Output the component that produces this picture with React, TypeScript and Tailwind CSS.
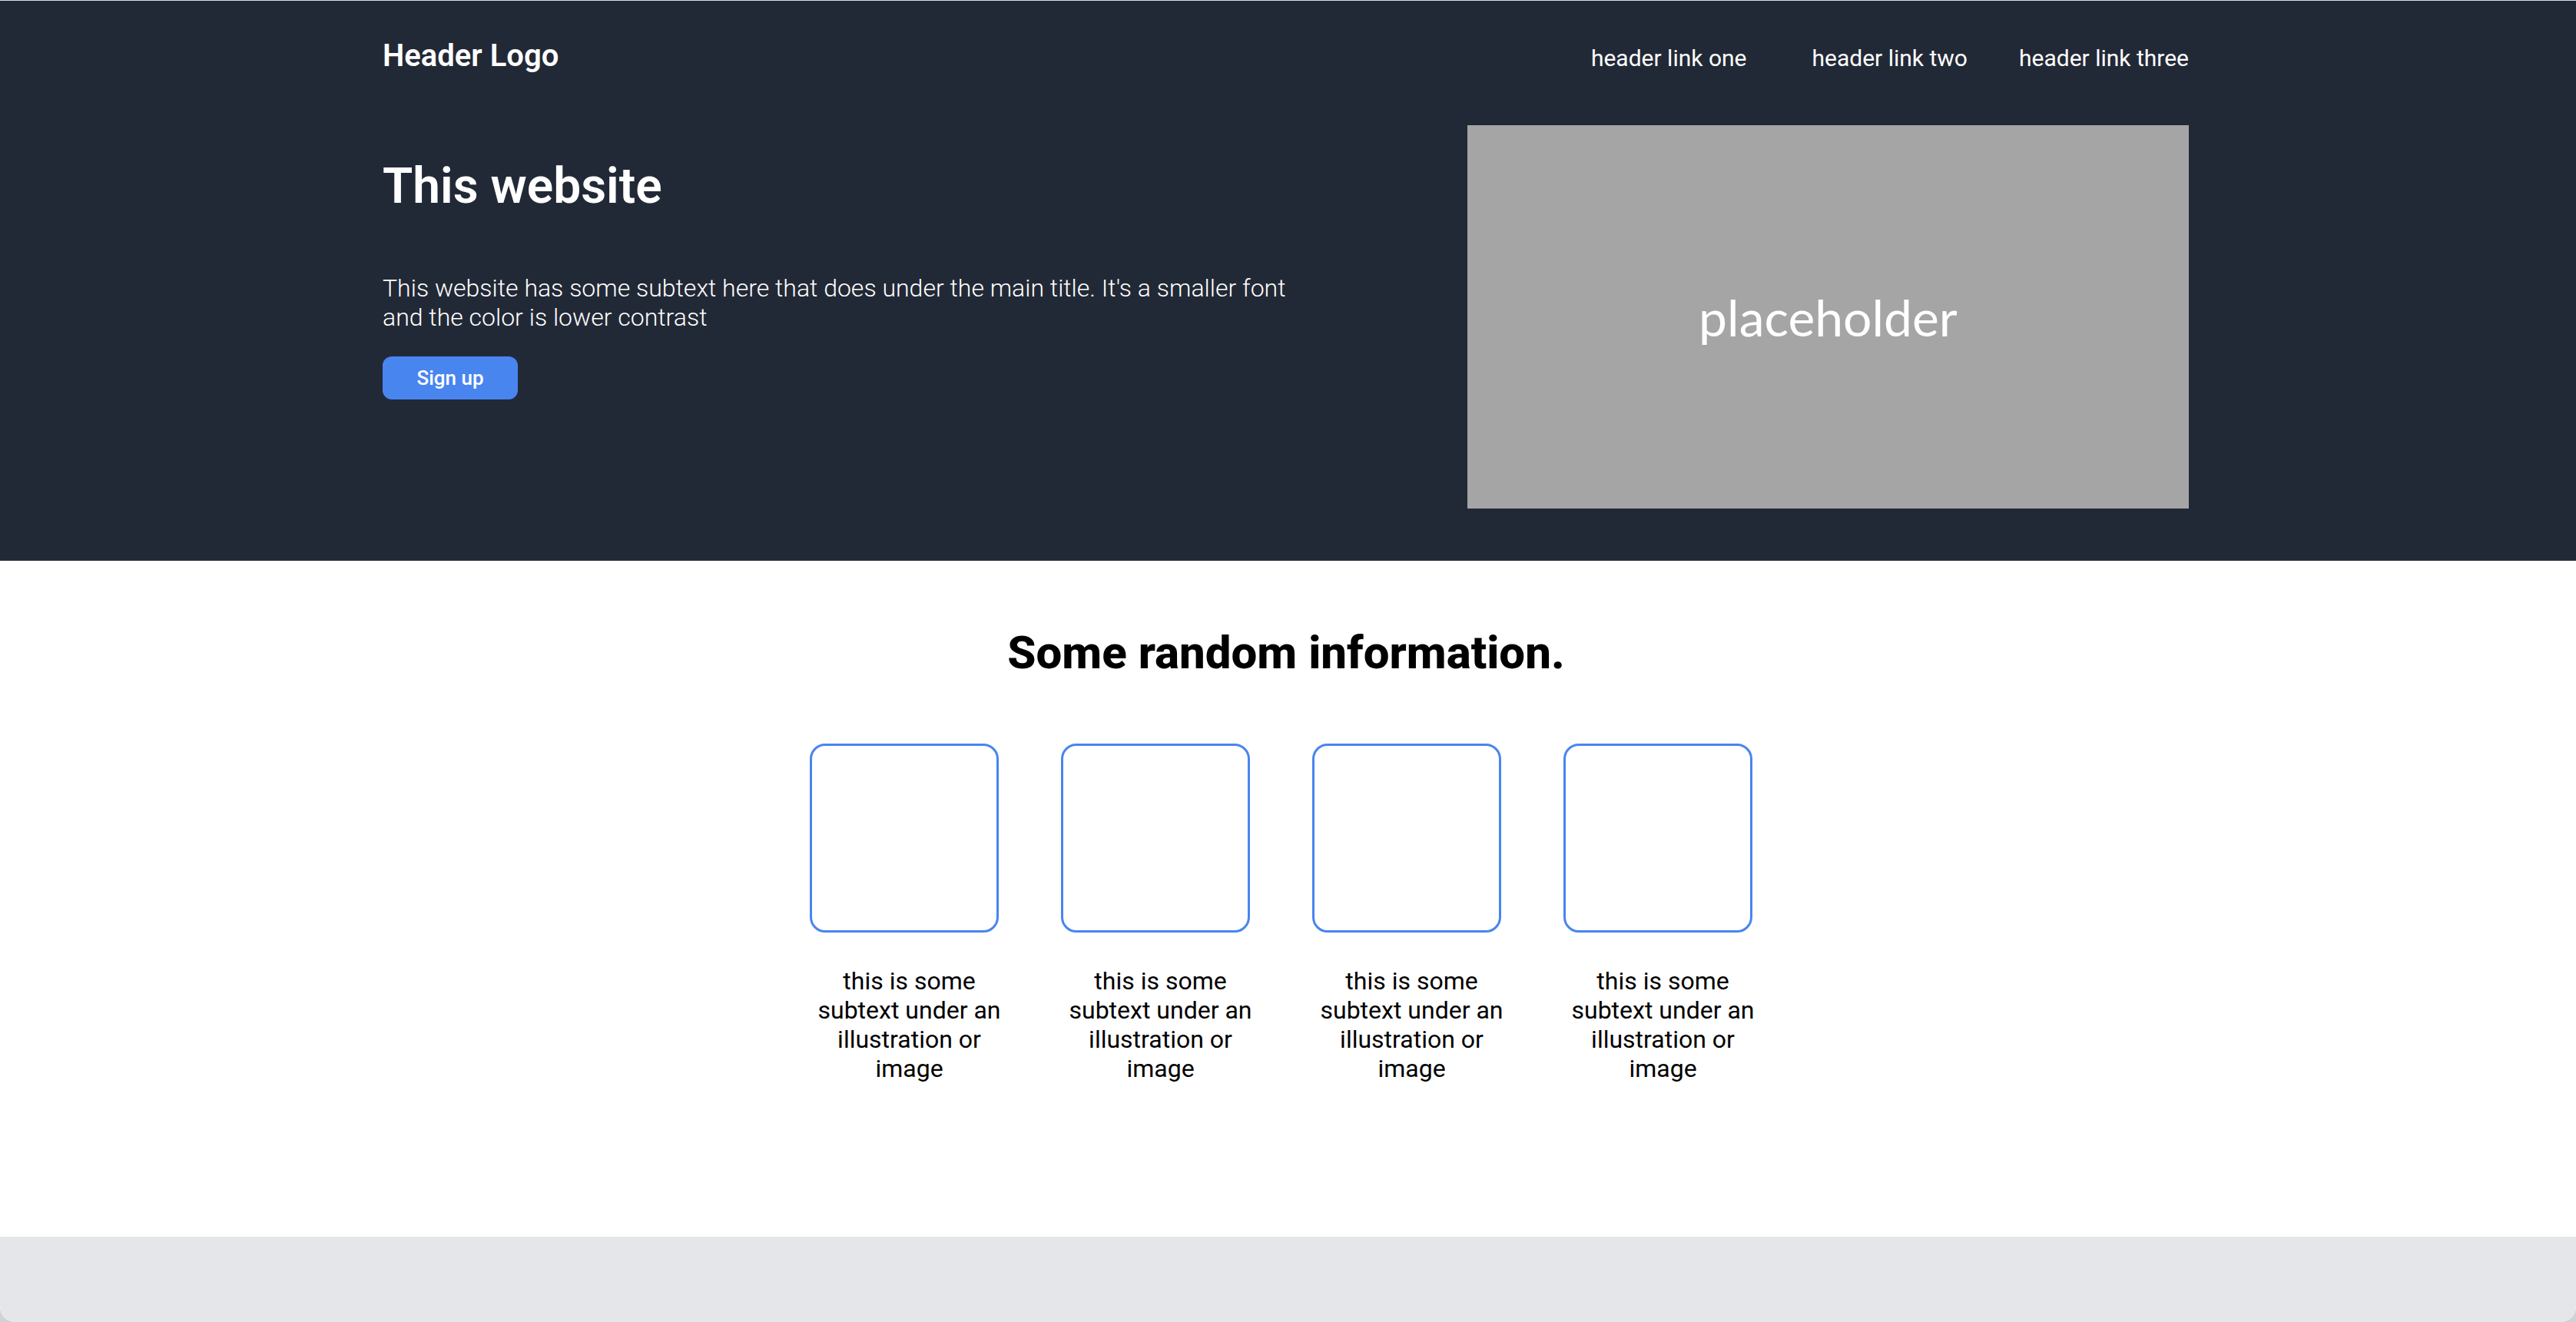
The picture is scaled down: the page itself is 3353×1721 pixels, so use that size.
const cards = [1, 2, 3, 4];
const caption = "this is some subtext under an illustration or image";

export default function App() {
  return (
    <div className="bg-[#d2d2d2]">
      <div className="flex min-h-screen flex-col overflow-hidden rounded-b-[20px] bg-white font-[Roboto,sans-serif] text-black">
        <div className="border-t border-[#d5dede] bg-[#222936] pr-1.5 text-white">
          <div className="mx-auto max-w-[2351px] pt-12 pb-[68px]">
            <header className="flex items-baseline justify-between">
              <a href="#" className="text-[40px] leading-[48px] font-semibold">
                Header Logo
              </a>
              <nav className="flex gap-[67px] text-[30px] leading-[36px]">
                <a href="#one" className="mr-[18px]">
                  header link one
                </a>
                <a href="#two">header link two</a>
                <a href="#three">header link three</a>
              </nav>
            </header>

            <section className="mt-[66px] flex items-start justify-between gap-10">
              <div className="max-w-[1200px] pt-[42px]">
                <h1 className="text-[64px] leading-[76px] font-semibold">This website</h1>
                <p className="mt-[75px] text-[32px] leading-[38px] font-light">
                  This website has some subtext here that does under the main title. It's a smaller font
                  and the color is lower contrast
                </p>
                <button
                  type="button"
                  className="mt-8 h-14 w-44 rounded-xl bg-[#4985ef] text-[26px] leading-[30px] font-medium"
                >
                  Sign up
                </button>
              </div>
              <div className="flex aspect-[939/499] w-2/5 max-w-[939px] items-center justify-center bg-[#a5a5a5] font-[Lato,sans-serif] text-[66px]">
                placeholder
              </div>
            </section>
          </div>
        </div>

        <main className="pt-[84px] pr-[5px] pb-[200px]">
          <h2 className="text-center text-[60px] leading-[72px] font-extrabold">
            Some random information.
          </h2>
          <div className="mt-[82px] flex flex-wrap justify-center gap-[67px]">
            {cards.map((card) => (
              <div key={card} className="w-[260px]">
                <div className="size-[246px] rounded-[20px] border-3 border-[#4985ef]" />
                <p className="mt-11 text-center text-[32px] leading-[38px]">{caption}</p>
              </div>
            ))}
          </div>
        </main>

        <footer className="flex-1 bg-[#e5e6ea]" />
      </div>
    </div>
  );
}
